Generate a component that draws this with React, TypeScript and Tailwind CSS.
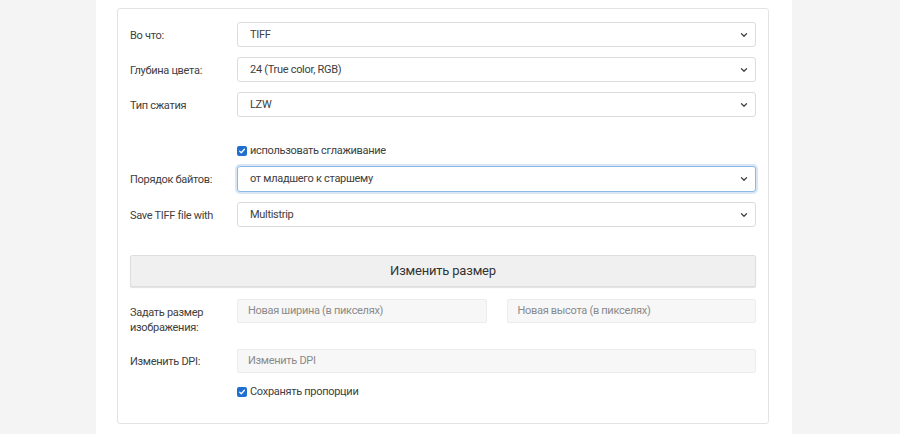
import { ChevronDown } from "lucide-react"

const font = { fontFamily: "Roboto, 'Noto Sans', sans-serif" }

function Check() {
  return (
    <span className="inline-flex h-[10px] w-[10px] items-center justify-center rounded-[2px] bg-[#1f6fd1]">
      <svg viewBox="0 0 10 10" className="h-[8px] w-[8px]">
        <path d="M2 5.2 L4.1 7.2 L8 2.8" fill="none" stroke="white" strokeWidth="1.6" strokeLinecap="round" strokeLinejoin="round" />
      </svg>
    </span>
  )
}

function Select({ value, focused }: { value: string; focused?: boolean }) {
  return (
    <div
      className={
        focused
          ? "flex h-[26px] flex-1 items-center justify-between rounded-[3px] border border-[#8fb8e6] bg-white pl-3 pr-[6px] shadow-[0_0_0_2px_rgba(143,184,230,0.35)]"
          : "flex h-[25px] flex-1 items-center justify-between rounded-[3px] border border-[#dcdcdc] bg-white pl-3 pr-[6px]"
      }
    >
      <span className="pt-px text-[11px] tracking-[-0.3px] text-[#404040]">{value}</span>
      <ChevronDown className="h-[10px] w-[10px] text-[#444]" strokeWidth={3} />
    </div>
  )
}

function Row({ label, children, className, top }: { label: string; children: React.ReactNode; className?: string; top?: boolean }) {
  return (
    <div className={"flex " + (top ? "items-start " : "items-center ") + (className ?? "")}>
      <div
        className={
          "mr-[7px] w-[100px] shrink-0 text-[11px] leading-[15px] tracking-[-0.3px] text-[#404040] " +
          (top ? "pt-[6px]" : "pt-px")
        }
      >
        {label}
      </div>
      {children}
    </div>
  )
}

function Input({ placeholder }: { placeholder: string }) {
  return (
    <div className="flex h-[24px] flex-1 items-center rounded-[2px] border border-[#ececec] bg-[#f7f7f7] pl-[10px] pt-px text-[11px] tracking-[-0.3px] text-[#8a8a8a]">
      {placeholder}
    </div>
  )
}

export default function App() {
  return (
    <div className="flex h-[434px] w-full bg-[#f4f4f4]" style={font}>
      <div className="ml-[96px] w-[696px] bg-white pt-[8px]">
        <div className="ml-[21px] h-[416px] w-[652px] rounded-[3px] border border-[#e3e3e3] bg-white px-3 pt-[13px]">
          <Row label="Во что:">
            <Select value="TIFF" />
          </Row>
          <Row label="Глубина цвета:" className="mt-[10px]">
            <Select value="24 (True color, RGB)" />
          </Row>
          <Row label="Тип сжатия" className="mt-[10px]">
            <Select value="LZW" />
          </Row>
          <div className="ml-[107px] mt-[26px] flex h-[16px] items-center gap-[3px] text-[11px] tracking-[-0.3px] text-[#404040]">
            <Check />
            <span>использовать сглаживание</span>
          </div>
          <Row label="Порядок байтов:" className="mt-[7px]">
            <Select value="от младшего к старшему" focused />
          </Row>
          <Row label="Save TIFF file with" className="mt-[10px]">
            <Select value="Multistrip" />
          </Row>
          <button className="mt-[28px] flex h-[32px] w-full items-center justify-center rounded-[2px] border border-[#dedede] bg-[#f0f0f0] text-[13px] tracking-[-0.2px] text-[#333] shadow-[0_1px_1px_rgba(0,0,0,0.12)]">
            Изменить размер
          </button>
          <Row label="Задать размер изображения:" className="mt-[12px]" top>
            <div className="flex flex-1 gap-[20px]">
              <Input placeholder="Новая ширина (в пикселях)" />
              <Input placeholder="Новая высота (в пикселях)" />
            </div>
          </Row>
          <Row label="Изменить DPI:" className="mt-[14px]">
            <Input placeholder="Изменить DPI" />
          </Row>
          <div className="ml-[107px] mt-[11px] flex h-[16px] items-center gap-[3px] text-[11px] tracking-[-0.3px] text-[#404040]">
            <Check />
            <span>Сохранять пропорции</span>
          </div>
        </div>
      </div>
    </div>
  )
}
